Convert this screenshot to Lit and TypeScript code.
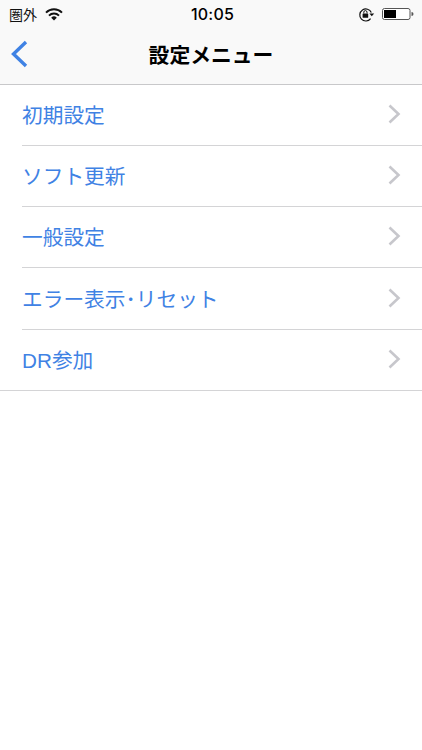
import { LitElement, html, css } from "lit";
import { customElement } from "lit/decorators.js";

const ITEMS = ["初期設定", "ソフト更新", "一般設定", "エラー表示･リセット", "DR参加"];

@customElement("app-root")
export class AppRoot extends LitElement {
  static styles = css`
    :host {
      display: block;
      width: 422px;
      height: 750px;
      background: #fff;
      font-family: "Liberation Sans", "Noto Sans CJK JP", sans-serif;
      overflow: hidden;
    }
    svg {
      display: block;
    }
    .head {
      background: #f9f9f9;
      height: 84px;
      border-bottom: 1px solid #c8c8ca;
      display: flex;
      flex-direction: column;
    }
    .status {
      height: 28px;
      display: grid;
      grid-template-columns: 1fr auto 1fr;
      align-items: center;
      color: #000;
    }
    .left {
      display: flex;
      align-items: center;
      gap: 8px;
      padding-left: 9px;
      font-size: 14px;
      color: #111;
    }
    .time {
      font-size: 16px;
      font-weight: 500;
      letter-spacing: 0.2px;
      padding-left: 3px;
      font-family: "Inter", "Liberation Sans", sans-serif;
    }
    .right {
      display: flex;
      justify-content: flex-end;
      align-items: center;
      gap: 7px;
      padding-right: 8px;
    }
    .nav {
      flex: 1;
      display: flex;
      align-items: center;
      justify-content: center;
      position: relative;
      padding-bottom: 5px;
    }
    .back {
      position: absolute;
      left: 10px;
      top: 11px;
    }
    .title {
      font-size: 20.8px;
      font-weight: 700;
      color: #000;
    }
    .list {
      display: flex;
      flex-direction: column;
    }
    .row {
      box-sizing: border-box;
      height: 61px;
      margin-left: 22px;
      border-bottom: 1px solid #d4d4d6;
      display: flex;
      align-items: center;
      justify-content: space-between;
      padding-right: 21px;
      padding-bottom: 2px;
      color: #3f82e4;
      font-size: 20.7px;
    }
    .row:nth-child(4) {
      height: 62px;
    }
    .row:last-child {
      margin-left: 0;
      padding-left: 22px;
    }
  `;

  render() {
    return html`
      <div class="head">
        <div class="status">
          <div class="left">
            <span>圏外</span>
            <svg width="18" height="13" viewBox="0 0 18 13">
              <path d="M1 4.6 A11.5 11.5 0 0 1 17 4.6" fill="none" stroke="#111" stroke-width="2" />
              <path d="M4 7.6 A7.2 7.2 0 0 1 14 7.6" fill="none" stroke="#111" stroke-width="2" />
              <path d="M6.2 9.7 A4 4 0 0 1 11.8 9.7 L9 12.6 Z" fill="#111" />
            </svg>
          </div>
          <div class="time">10:05</div>
          <div class="right">
            <svg width="17" height="15" viewBox="0 0 17 15">
              <path d="M12.6 11.6 A6 6 0 1 1 13.3 5.6" fill="none" stroke="#111" stroke-width="1.2" />
              <path d="M11.4 6.4 L16.2 6.4 L13.8 9.2 Z" fill="#111" />
              <rect x="4.6" y="6.4" width="5.6" height="4.4" rx="0.6" fill="#111" />
              <path d="M5.8 6.4 V5.2 A1.6 1.6 0 0 1 9 5.2 V6.4" fill="none" stroke="#111" stroke-width="1" />
            </svg>
            <svg width="32" height="14" viewBox="0 0 32 14">
              <rect x="0.5" y="1.5" width="27.5" height="11" rx="2" fill="#fff" stroke="#555" />
              <rect x="2" y="3" width="12" height="8" fill="#000" />
              <path d="M29.5 5 a2 2 0 0 1 0 4 Z" fill="#555" />
            </svg>
          </div>
        </div>
        <div class="nav">
          <svg class="back" width="20" height="30" viewBox="0 0 20 30">
            <path d="M16 3 L3.5 15 L16 27" fill="none" stroke="#3f82e4" stroke-width="3.4" />
          </svg>
          <div class="title">設定メニュー</div>
        </div>
      </div>
      <div class="list">
        ${ITEMS.map(
          (t) => html`
            <div class="row">
              <span>${t}</span>
              <svg width="13" height="20" viewBox="0 0 13 20"><path d="M1.5 1.5 L10.5 10 L1.5 18.5" fill="none" stroke="#c7c7cc" stroke-width="2.6"/></svg>
            </div>
          `
        )}
      </div>
    `;
  }
}
